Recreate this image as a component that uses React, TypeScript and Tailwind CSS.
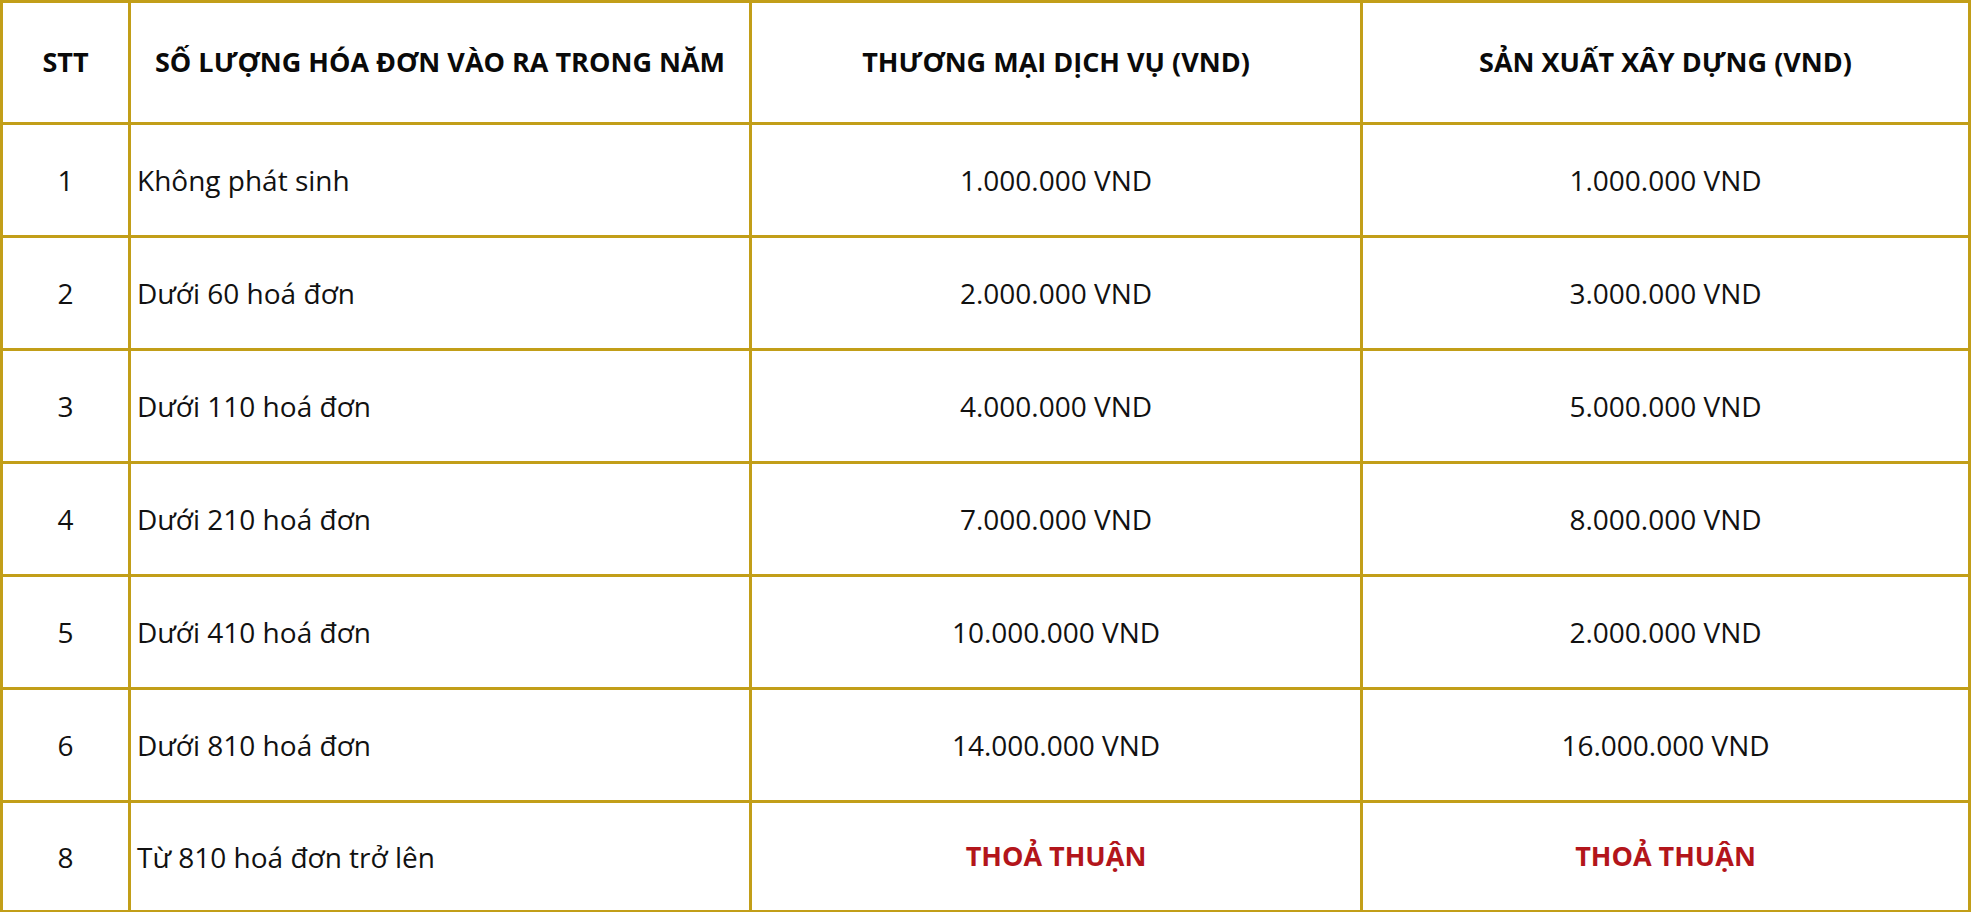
const rows = [
  { stt: "1", name: "Không phát sinh", tm: "1.000.000 VND", sx: "1.000.000 VND" },
  { stt: "2", name: "Dưới 60 hoá đơn", tm: "2.000.000 VND", sx: "3.000.000 VND" },
  { stt: "3", name: "Dưới 110 hoá đơn", tm: "4.000.000 VND", sx: "5.000.000 VND" },
  { stt: "4", name: "Dưới 210 hoá đơn", tm: "7.000.000 VND", sx: "8.000.000 VND" },
  { stt: "5", name: "Dưới 410 hoá đơn", tm: "10.000.000 VND", sx: "2.000.000 VND" },
  { stt: "6", name: "Dưới 810 hoá đơn", tm: "14.000.000 VND", sx: "16.000.000 VND" },
];

const line = "border-[3px] border-[#c29e18] align-middle";
const cell = `${line} text-center`;

export default function App() {
  return (
    <div className="bg-white w-[1971px] h-[912px] font-['Open_Sans',sans-serif] text-[28px] text-[#111]">
      <table className="w-full table-fixed border-collapse">
        <colgroup>
          <col className="w-[128px]" />
          <col className="w-[621px]" />
          <col className="w-[611px]" />
          <col />
        </colgroup>
        <thead>
          <tr className="h-[122px] font-bold text-[27px] text-[#0a0a0a]">
            <th className={cell}>STT</th>
            <th className={cell}>SỐ LƯỢNG HÓA ĐƠN VÀO RA TRONG NĂM</th>
            <th className={cell}>THƯƠNG MẠI DỊCH VỤ (VND)</th>
            <th className={cell}>SẢN XUẤT XÂY DỰNG (VND)</th>
          </tr>
        </thead>
        <tbody>
          {rows.map((r) => (
            <tr key={r.stt} className="h-[113px]">
              <td className={cell}>{r.stt}</td>
              <td className={`${line} text-left pl-1.5`}>{r.name}</td>
              <td className={cell}>{r.tm}</td>
              <td className={cell}>{r.sx}</td>
            </tr>
          ))}
          <tr className="h-[110px]">
            <td className={cell}>8</td>
            <td className={`${line} text-left pl-1.5`}>Từ 810 hoá đơn trở lên</td>
            <td className={`${cell} font-bold text-[27px] text-[#b3151b]`}>THOẢ THUẬN</td>
            <td className={`${cell} font-bold text-[27px] text-[#b3151b]`}>THOẢ THUẬN</td>
          </tr>
        </tbody>
      </table>
    </div>
  );
}
